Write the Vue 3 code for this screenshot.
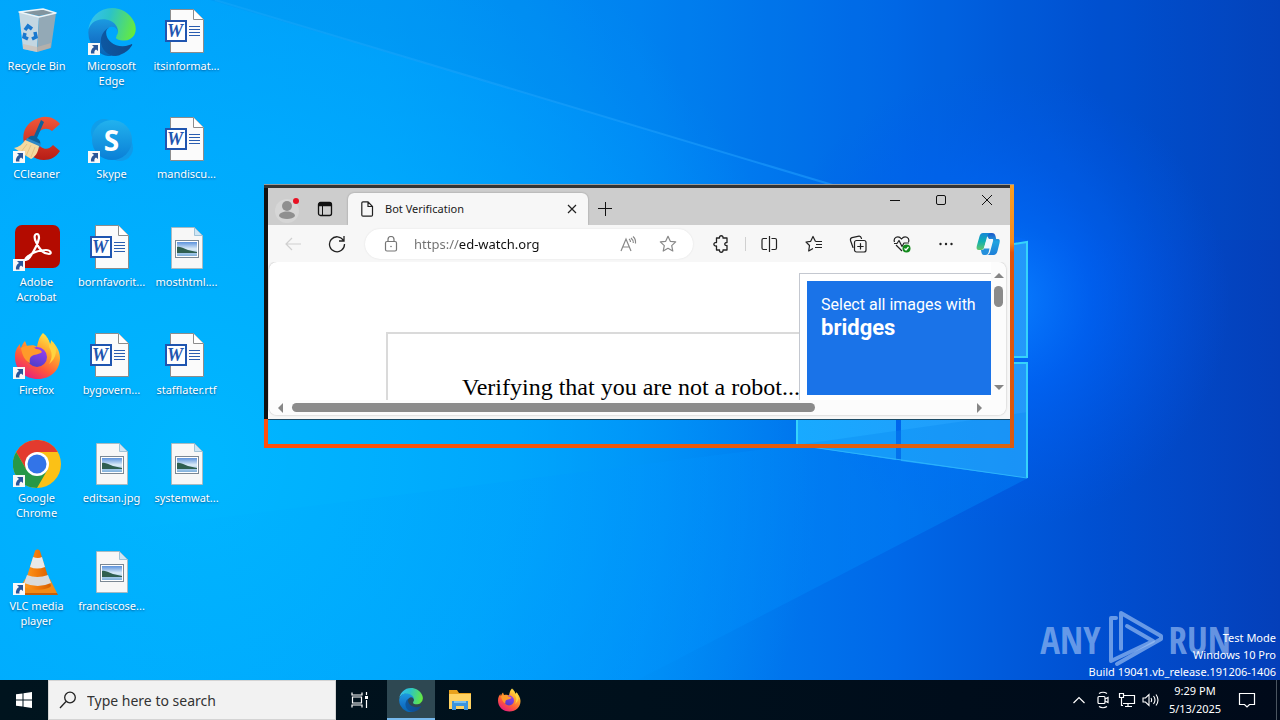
<template>
  <div class="screen">
    <svg class="symbols" aria-hidden="true">
      <defs>
        <linearGradient id="edge-a" x1="0" y1="0" x2="1" y2="0">
          <stop offset="0" stop-color="#0c59a4" />
          <stop offset="1" stop-color="#114a8b" />
        </linearGradient>
        <linearGradient id="edge-b" x1="0.5" y1="0" x2="0.5" y2="1">
          <stop offset="0" stop-color="#1b9de2" />
          <stop offset="0.5" stop-color="#1679cc" />
          <stop offset="1" stop-color="#0564b4" />
        </linearGradient>
        <linearGradient id="edge-c" x1="0" y1="0.4" x2="1" y2="0.6">
          <stop offset="0" stop-color="#35c1f1" />
          <stop offset="0.4" stop-color="#2bc3c8" />
          <stop offset="1" stop-color="#66eb3c" />
        </linearGradient>
        <linearGradient id="fox-a" x1="0.8" y1="0" x2="0.2" y2="1">
          <stop offset="0" stop-color="#fff44f" />
          <stop offset="0.35" stop-color="#ffa32c" />
          <stop offset="0.65" stop-color="#ff5a3a" />
          <stop offset="1" stop-color="#e31587" />
        </linearGradient>
        <linearGradient id="fox-b" x1="0.7" y1="0" x2="0.3" y2="1">
          <stop offset="0" stop-color="#9b3df0" />
          <stop offset="1" stop-color="#4b3fc8" />
        </linearGradient>
        <linearGradient id="skype-a" x1="0" y1="0" x2="0" y2="1">
          <stop offset="0" stop-color="#22b2ee" />
          <stop offset="1" stop-color="#0a7fd6" />
        </linearGradient>
        <linearGradient id="cc-a" x1="0" y1="0" x2="0" y2="1">
          <stop offset="0" stop-color="#f0583a" />
          <stop offset="1" stop-color="#b81d16" />
        </linearGradient>
        <linearGradient id="vlc-a" x1="0" y1="0" x2="1" y2="0">
          <stop offset="0" stop-color="#ff9a1f" />
          <stop offset="0.5" stop-color="#f27a0a" />
          <stop offset="1" stop-color="#d65f00" />
        </linearGradient>
        <linearGradient id="photo-a" x1="0" y1="0" x2="0" y2="1">
          <stop offset="0" stop-color="#5c92dc" />
          <stop offset="0.5" stop-color="#dcecf8" />
          <stop offset="1" stop-color="#7fb0dc" />
        </linearGradient>
        <linearGradient id="pilot-a" x1="0" y1="0" x2="0" y2="1">
          <stop offset="0" stop-color="#1688d8" />
          <stop offset="0.5" stop-color="#10b0b0" />
          <stop offset="1" stop-color="#62c66a" />
        </linearGradient>
        <linearGradient id="pilot-b" x1="0" y1="0" x2="0" y2="1">
          <stop offset="0" stop-color="#1a56c8" />
          <stop offset="0.4" stop-color="#22a4e0" />
          <stop offset="1" stop-color="#1e7fd8" />
        </linearGradient>
      </defs>

      <symbol id="edge" viewBox="4 0 257 259">
        <path fill="url(#edge-a)" d="M235.68 195.46a93.73 93.73 0 0 1-10.54 4.71 101.87 101.87 0 0 1-35.9 6.46c-47.32 0-88.54-32.55-88.54-74.32A31.48 31.48 0 0 1 117.13 105c-42.8 1.8-53.8 46.4-53.8 72.53 0 73.88 68.09 81.37 82.76 81.37 7.91 0 19.84-2.3 27-4.56l1.31-.44a128.34 128.34 0 0 0 66.6-52.8 4 4 0 0 0-5.32-5.64z" />
        <path fill="url(#edge-b)" d="M110.34 246.34A79.2 79.2 0 0 1 87.6 225 80.72 80.72 0 0 1 117.13 105c3.12-1.47 8.45-4.13 15.54-4a32.35 32.35 0 0 1 25.69 13 31.88 31.88 0 0 1 6.36 18.66c0-.21 24.46-79.6-80-79.6-43.9 0-80 41.66-80 78.21a130.15 130.15 0 0 0 12.11 56 128 128 0 0 0 156.38 67.11 75.55 75.55 0 0 1-62.78-8z" />
        <path fill="url(#edge-c)" d="M156.94 153.78c-.81 1.05-3.3 2.5-3.3 5.66 0 2.61 1.7 5.12 4.72 7.23 14.38 10 41.49 8.68 41.56 8.68a59.56 59.56 0 0 0 30.27-8.35 61.38 61.38 0 0 0 30.43-52.88c.26-22.41-8-37.31-11.34-43.91C228.09 28.76 182.35 0 132.61 0a128 128 0 0 0-128 126.2c.48-36.54 36.8-66.05 80-66.05 3.5 0 23.46.34 42 10.07 16.34 8.58 24.9 18.94 30.85 29.21 6.18 10.67 7.28 24.15 7.28 29.52s-2.74 13.33-7.8 19.83z" />
      </symbol>

      <symbol id="firefox" viewBox="0 0 48 48">
        <path fill="url(#fox-a)" d="M30 1c4 4 6 7 7 11 1-1 1-3 1-4 5 5 9 11 9 18 0 12-9 21-22 21S2 38 2 25c0-6 2-10 5-13 0 2 0 3 1 4 1-3 2-5 4-7l2 5c4-1 8-1 10 1 1-5 2-10 6-14z" />
        <circle cx="24" cy="25" r="10" fill="url(#fox-b)" />
        <path fill="#ff9a2a" d="M8 16c4-3 11-3 15 1 3 0 5 1 6 3-3 3-8 2-10 4-2 1-3 4-2 7-5-2-8-8-9-15z" />
        <path fill="#ffd33f" d="M30 1c4 5 6 8 6 14 3 4 4 11 0 17 8-6 9-16 4-22-1 2-2 3-3 3-1-5-3-9-7-12z" />
      </symbol>

      <symbol id="chrome" viewBox="0 0 48 48">
        <circle cx="24" cy="24" r="24" fill="#fbc116" />
        <path fill="#e33b2e" d="M3.200 12A24 24 0 0 1 44.800 12H24L13.600 30z" />
        <path fill="#279847" d="M3.200 12A24 24 0 0 0 24 48L34.400 30H13.600z" />
        <circle cx="24" cy="24" r="12" fill="#fff" />
        <circle cx="24" cy="24" r="9.500" fill="#3274e8" />
      </symbol>

      <symbol id="bin" viewBox="0 0 48 48">
        <path fill="#c3d7e2" d="M6 4l20 5-2 35-14-3z" />
        <path fill="#93a9b6" d="M26 9l17-4-5 35-14 4z" />
        <path fill="#82959f" d="M8 4l22-3 11 4-15 3z" />
        <path fill="none" stroke="#edf4f7" stroke-width="1.500" stroke-linejoin="round" d="M6 4l24-3 13 4-17 4z" />
        <path fill="#d4b7a2" opacity="0.5" d="M10 36l14 3 14-4-1 5-13 4-14-3z" />
        <g fill="none" stroke="#1878cf" stroke-width="3.500">
          <path d="M12 22l3-4 4 3" />
          <path d="M22 24l1 5-4 2" />
          <path d="M15 31l-4-2 1-4" />
        </g>
      </symbol>

      <symbol id="ccleaner" viewBox="0 0 48 48">
        <path fill="url(#cc-a)" d="M47 8C42 2 34-1 26 2 15 5 8 15 11 27c2 10 10 17 20 17 7 0 12-3 16-9l-7-6c-3 4-8 5-12 2-5-4-6-11-2-15 4-4 9-4 13-1z" />
        <path fill="#0f629b" d="M28 4l3 2-7 16c3 2 4 4 3 7l-13-5c1-3 4-5 7-4z" />
        <path fill="#2c88c8" d="M14 22l14 6-2 4-14-5z" />
        <path fill="#f4d9a0" d="M12 24l14 6c-1 7-4 11-8 13L1 32c5-1 9-4 11-8z" />
        <path fill="none" stroke="#e2bb7c" stroke-width="0.800" d="M14 28l-6 8M18 29l-5 11M22 31l-4 10" />
      </symbol>

      <symbol id="skype" viewBox="0 0 48 48">
        <circle cx="16" cy="16" r="13" fill="#1799e0" opacity="0.7" />
        <circle cx="32" cy="32" r="13" fill="#1a8fdc" opacity="0.6" />
        <circle cx="24" cy="24" r="20" fill="url(#skype-a)" />
      </symbol>

      <symbol id="acrobat" viewBox="0 0 48 48">
        <rect x="2" y="1" width="45" height="43" rx="7" fill="#b30b00" />
        <path fill="none" stroke="#fff" stroke-width="2.200" stroke-linejoin="round" d="M24 10c-3 0-3 4-1 8 3 7 8 12 13 12 3 0 2-4-3-4-7 0-14 3-19 7-4 4 0 4 3 0 4-6 8-13 9-19 0-3-1-4-2-4z" />
      </symbol>

      <symbol id="vlc" viewBox="0 0 48 48">
        <path fill="#f28b16" d="M12 31h25l7 14H4z" />
        <path fill="#c95f05" d="M4 45h40l1 2H4z" />
        <path fill="url(#vlc-a)" d="M22 3c1-2 4-2 5 0l11 35c-4 5-23 5-27 0z" />
        <path fill="#e9e9e9" d="M20 9q5 2 9 0l3 10q-8 3-15 0z" />
        <path fill="#dadada" d="M14 27q10 4 21 0l3 8q-13 6-27 0z" />
      </symbol>

      <symbol id="word" viewBox="0 0 48 48">
        <path fill="#fbfbfb" stroke="#8c8c8c" d="M7.500 1.500h23l10 10v33h-33z" />
        <path fill="#fff" stroke="#8c8c8c" d="M30.500 1.500v10h10" />
        <path stroke="#2a5db0" stroke-width="1" d="M26 18.500h11M26 21.500h11M26 24.500h11M26 27.500h11" />
        <rect x="3" y="13" width="20" height="20" fill="#fff" stroke="#1f55b0" stroke-width="2" />
      </symbol>

      <symbol id="photo" viewBox="0 0 48 48">
        <path fill="#f7f7f7" stroke="#b4b4b4" stroke-width="0.800" d="M8.500 3.500h23l8 8v33h-31z" />
        <path fill="#cfe6f5" stroke="#8fb6cf" stroke-width="0.800" d="M31.500 3.500v8h8z" />
        <rect x="12.500" y="16.500" width="23" height="17" fill="#fff" stroke="#7b8894" />
        <rect x="14" y="18" width="20" height="14" fill="url(#photo-a)" />
        <path fill="#2f5f50" d="M14 23c4-1 7 2 11 3l9 2v1H14z" />
      </symbol>

      <symbol id="explorer" viewBox="0 0 24 24">
        <path fill="#e8a11c" d="M1 2h8l2 3h12v3H1z" />
        <path fill="#ffd262" d="M1 6h22v15H1z" />
        <path fill="#3c94dc" d="M4 13h16v9h-4v-4H8v4H4z" />
        <path fill="#79c0f0" d="M6 13h12v2H6z" />
      </symbol>

      <symbol id="copilot" viewBox="0 0 24 24">
        <path fill="url(#pilot-b)" d="M9 1h7c2 0 3 1 3.500 3l.7 3H22c2 0 2 2 1.500 4l-2 8c-.6 2.500-2 4-4 4h-7c2 0 3-1 3.500-3l3-11c.5-1.500 0-2-1-2h-3z" />
        <path fill="url(#pilot-a)" d="M16 1H7C5 1 4 2.500 3.300 5L.8 14c-.6 2.500 0 4 2 4H5c2 0 2.700-1 3.200-3L11 5c.7-2.500 2-4 5-4z" />
        <path fill="#eef8ff" d="M10.500 8h5.300l-2.300 8.500H8z" />
        <path fill="#2590dc" d="M8 16.500h5.500l-.5 2.500c-.6 2.500-1.500 4-3.500 4H8c-2 0-2.500-1.500-3-5 2 0 2.500 0 3-1.500z" />
      </symbol>
    </svg>

    <main class="desktop">
      <svg class="wallpaper" viewBox="0 0 1280 720" preserveAspectRatio="xMidYMid slice" aria-hidden="true">
        <defs>
          <linearGradient id="wp-base" x1="0" y1="0" x2="1280" y2="0" gradientUnits="userSpaceOnUse">
            <stop offset="0" stop-color="#00a5fb" />
            <stop offset="0.3" stop-color="#009af8" />
            <stop offset="0.5" stop-color="#0086f4" />
            <stop offset="0.7" stop-color="#0068e8" />
            <stop offset="0.85" stop-color="#0050d2" />
            <stop offset="1" stop-color="#043fb9" />
          </linearGradient>
          <radialGradient id="wp-cyan" cx="200" cy="460" r="620" gradientUnits="userSpaceOnUse">
            <stop offset="0" stop-color="#00b7ff" />
            <stop offset="0.5" stop-color="#00b0ff" stop-opacity="0.7" />
            <stop offset="1" stop-color="#00a8ff" stop-opacity="0" />
          </radialGradient>
          <radialGradient id="wp-glow" cx="1000" cy="300" r="230" gradientUnits="userSpaceOnUse">
            <stop offset="0" stop-color="#0a80ff" />
            <stop offset="0.4" stop-color="#0068ff" stop-opacity="0.6" />
            <stop offset="1" stop-color="#0058f0" stop-opacity="0" />
          </radialGradient>
          <linearGradient id="wp-ray" x1="230" y1="0" x2="900" y2="0" gradientUnits="userSpaceOnUse">
            <stop offset="0" stop-color="#35b6ff" stop-opacity="0.2" />
            <stop offset="1" stop-color="#1d9dff" stop-opacity="0.6" />
          </linearGradient>
          <linearGradient id="wp-low" x1="900" y1="0" x2="100" y2="0" gradientUnits="userSpaceOnUse">
            <stop offset="0" stop-color="#0090ff" stop-opacity="0.35" />
            <stop offset="1" stop-color="#00a0ff" stop-opacity="0" />
          </linearGradient>
          <linearGradient id="wp-pane" x1="797" y1="0" x2="1028" y2="0" gradientUnits="userSpaceOnUse">
            <stop offset="0" stop-color="#18aaff" />
            <stop offset="1" stop-color="#2498fa" />
          </linearGradient>
        </defs>
        <rect width="1280" height="720" fill="url(#wp-base)" />
        <rect width="1280" height="720" fill="url(#wp-cyan)" />
        <rect width="1280" height="720" fill="url(#wp-glow)" />
        <path fill="#0060d0" opacity="0.100" d="M210 0H1280V240H1028L830 184z" />
        <path fill="url(#wp-low)" d="M797 445L1028 478 560 720H0V545z" />
        <path fill="none" stroke="url(#wp-ray)" stroke-width="2" d="M215 0L836 186" />
        <g fill="url(#wp-pane)">
          <path d="M901 262L1028 242V357H901z" />
          <path d="M797 364H896V460L797 445z" />
          <path d="M901 364L1028 362V478L901 461z" />
        </g>
        <path fill="#0a8af0" opacity="0.350" d="M797 445L1028 412V478z" />
        <path fill="none" stroke="#36d3fb" stroke-width="2" d="M1014 244L1027 242V357H1014M1014 363H1027V478M797 445V400" />
        <path fill="none" stroke="#2cb4fb" stroke-width="1" d="M1027 478L797 445" />
      </svg>

      <ul class="icons">
        <li v-for="item in shortcuts" :key="item.label">
          <button type="button" class="icon">
            <span class="picture">
              <svg width="48" height="48" aria-hidden="true"><use :href="'#' + item.icon" /></svg>
              <span v-if="item.icon === 'word'" class="word-w">W</span>
              <span v-if="item.icon === 'skype'" class="skype-s">S</span>
              <svg v-if="item.link" class="arrow" viewBox="0 0 12 12" aria-hidden="true">
                <path fill="#f8f8f8" d="M0 0h12v12H0z" />
                <path fill="#2a5699" d="M4 2h6v6L8 6.500C6.500 7.500 6 9 6.500 10.500H3C2.500 8 3.500 5.500 6 4z" />
              </svg>
            </span>
            <span class="label">{{ item.label }}</span>
          </button>
        </li>
      </ul>

      <div class="frame">
        <section class="browser" aria-label="Bot Verification">
          <header class="titlebar">
            <button type="button" class="profile" aria-label="Profile">
              <svg width="28" height="28" viewBox="0 0 28 28">
                <circle cx="13" cy="16" r="12" fill="#d6d6d6" />
                <circle cx="13" cy="11" r="5" fill="#8f8f8f" />
                <path fill="#8f8f8f" d="M5 21c0-6 16-6 16 0-2 4-14 4-16 0z" />
                <circle cx="22" cy="6" r="3" fill="#e81123" />
              </svg>
            </button>
            <button type="button" class="tabs-menu" aria-label="Tab actions">
              <svg width="16" height="16" viewBox="0 0 16 16" fill="none" stroke="#111">
                <rect x="1.500" y="1.500" width="13" height="13" rx="2" stroke-width="1.300" />
                <path d="M2 3.500h12" stroke-width="3.500" />
                <path d="M5.500 5v9" />
              </svg>
            </button>
            <div class="tab">
              <svg width="14" height="16" viewBox="0 0 14 16" fill="none" stroke="#222" stroke-width="1.200">
                <path d="M3 .8h5l4.500 4.700V14c0 .7-.5 1.200-1.200 1.200H3c-.8 0-1.200-.5-1.200-1.200V2C1.800 1.300 2.200.8 3 .8zM8 .8V5.500h4.500" />
              </svg>
              <span class="tab-name">Bot Verification</span>
              <button type="button" class="tab-close" aria-label="Close tab">
                <svg width="10" height="10" viewBox="0 0 10 10" stroke="#222" stroke-width="1.200"><path d="M1 1l8 8M9 1L1 9" /></svg>
              </button>
            </div>
            <button type="button" class="new-tab" aria-label="New tab">
              <svg width="14" height="14" viewBox="0 0 14 14" stroke="#111"><path d="M7.500 0v14M0 6.500h14" /></svg>
            </button>
            <div class="window-buttons">
              <button type="button" aria-label="Minimize">
                <svg width="12" height="12" viewBox="0 0 12 12" stroke="#111"><path d="M1 6.500h10" /></svg>
              </button>
              <button type="button" aria-label="Maximize">
                <svg width="12" height="12" viewBox="0 0 12 12" stroke="#111" fill="none"><rect x="1.500" y="1.500" width="9" height="9" rx="1.500" /></svg>
              </button>
              <button type="button" aria-label="Close">
                <svg width="12" height="12" viewBox="0 0 12 12" stroke="#111"><path d="M1 1l10 10M11 1L1 11" /></svg>
              </button>
            </div>
          </header>

          <div class="toolbar">
            <button type="button" class="tool" aria-label="Back" disabled>
              <svg width="18" height="18" viewBox="0 0 18 18" fill="none" stroke="#d0d0d0" stroke-width="1.200"><path d="M17 9H2M8 3L2 9l6 6" /></svg>
            </button>
            <button type="button" class="tool" aria-label="Refresh">
              <svg width="18" height="18" viewBox="0 0 18 18" fill="none" stroke="#222" stroke-width="1.300"><path d="M15.500 5.500A7.500 7.500 0 1 0 16.500 9M16 1v5h-5" /></svg>
            </button>
            <div class="address">
              <svg width="14" height="16" viewBox="0 0 14 16" fill="none" stroke="#767676" stroke-width="1.200">
                <rect x="1.500" y="5.500" width="11" height="9.500" rx="1.500" />
                <path d="M4 5.500V3.500a3 3 0 0 1 6 0v2" />
                <circle cx="7" cy="10.500" r="0.800" fill="#767676" stroke="none" />
              </svg>
              <input v-model="url" class="url" type="text" aria-label="Address bar" spellcheck="false" />
              <button type="button" class="inline-tool" aria-label="Read aloud">
                <svg width="18" height="16" viewBox="0 0 18 16" fill="none" stroke="#888" stroke-width="1.200">
                  <path d="M2 15L7 3l5 12M4 11h6M10 3q1.500 1 1.500 3M12 2q2.500 2 2.300 5M14 .5q3 2.500 2.500 7" />
                </svg>
              </button>
              <button type="button" class="inline-tool" aria-label="Add to favorites">
                <svg width="18" height="18" viewBox="0 0 18 18" fill="none" stroke="#888" stroke-width="1.200" stroke-linejoin="round">
                  <path d="M9 1.300l2.300 5 5.400.6-4 3.700 1.100 5.400L9 13.300 4.200 16l1.100-5.400-4-3.700 5.400-.6z" />
                </svg>
              </button>
            </div>
            <button type="button" class="tool" aria-label="Extensions">
              <svg width="18" height="18" viewBox="0 0 18 18" fill="none" stroke="#222" stroke-width="1.300" stroke-linejoin="round">
                <path d="M4.500 3h3c-.5-3 4-3 3.500 0H15v4.500c-3-.3-3 3.500 0 3V15h-4c.5 3-4 3-3.500 0h-3v-4c-3.500.5-3.500-4 0-3.500z" />
              </svg>
            </button>
            <span class="divider"></span>
            <button type="button" class="tool split" aria-label="Split screen">
              <svg width="18" height="18" viewBox="0 0 18 18" fill="none" stroke="#222" stroke-width="1.200">
                <path d="M7 3.500H3.500c-1 0-1.500.5-1.500 1.500v8c0 1 .5 1.500 1.500 1.500H7M11.500 3.500H15c1 0 1.500.5 1.500 1.500v8c0 1-.5 1.500-1.500 1.500h-3.500M9.500 1v16" />
              </svg>
            </button>
            <button type="button" class="tool" aria-label="Favorites">
              <svg width="18" height="18" viewBox="0 0 18 18" fill="none" stroke="#222" stroke-width="1.200" stroke-linejoin="round">
                <path d="M10.500 6.500L8 1.500 5.700 6.300 1 7l3.500 3.500L3.700 16 8 13.500M10.500 6.500H17M11 9.500h6M10 12.500h7" />
              </svg>
            </button>
            <button type="button" class="tool" aria-label="Collections">
              <svg width="18" height="18" viewBox="0 0 18 18" fill="none" stroke="#222" stroke-width="1.200" stroke-linecap="round">
                <path d="M4 12.500L1.500 5.500C1.200 4 1.700 3 3 2.700l7-1.500c1.300-.2 2 .6 2.500 2.300" />
                <rect x="5.500" y="5.500" width="11.500" height="11.500" rx="2" />
                <path d="M11.500 8.500v5.500M8.700 11.500h5.500" />
              </svg>
            </button>
            <button type="button" class="tool" aria-label="Browser essentials">
              <svg width="18" height="18" viewBox="0 0 18 18" fill="none" stroke="#222" stroke-width="1.200" stroke-linejoin="round">
                <path d="M1.500 7C0 3 5-.5 8.500 4 12-.5 17 3 15.500 7M3 10l6 6M1 8.500h3L6 5.500l3 6 2-3.500h5" />
                <circle cx="13.500" cy="13.500" r="4" fill="#138a1c" stroke="none" />
                <path d="M11.500 13.500l1.500 1.500 2.500-3" stroke="#fff" />
              </svg>
            </button>
            <button type="button" class="tool" aria-label="Settings and more">
              <svg width="18" height="18" viewBox="0 0 18 18" fill="#222">
                <circle cx="3.500" cy="9" r="1.200" /><circle cx="9" cy="9" r="1.200" /><circle cx="14.500" cy="9" r="1.200" />
              </svg>
            </button>
            <button type="button" class="tool copilot" aria-label="Copilot">
              <svg width="24" height="24"><use href="#copilot" /></svg>
            </button>
          </div>

          <div class="viewport">
            <div class="page">
              <div class="check-box">
                <p>Verifying that you are not a robot...</p>
              </div>
              <div class="captcha">
                <div class="captcha-head">
                  <span>Select all images with</span>
                  <strong>bridges</strong>
                </div>
              </div>
            </div>
            <div class="vbar">
              <button type="button" class="up" aria-label="Scroll up"></button>
              <span class="thumb"></span>
              <button type="button" class="down" aria-label="Scroll down"></button>
            </div>
            <div class="hbar">
              <button type="button" class="left" aria-label="Scroll left"></button>
              <span class="track"><span class="thumb"></span></span>
              <button type="button" class="right" aria-label="Scroll right"></button>
            </div>
          </div>
        </section>
      </div>

      <div class="brand">
        <span>ANY</span>
        <svg width="56" height="60" viewBox="0 0 56 60" fill="none" stroke="currentColor" stroke-width="4" stroke-linejoin="round" stroke-linecap="round">
          <path d="M9 8H4v43M4 51l42-20L20 16" />
          <path d="M14 39V3l40 23v3L10 54" />
        </svg>
        <span>RUN</span>
      </div>
      <div class="build">
        <p>Test Mode</p>
        <p>Windows 10 Pro</p>
        <p>Build 19041.vb_release.191206-1406</p>
      </div>
    </main>

    <footer class="taskbar">
      <button type="button" class="start" aria-label="Start">
        <svg width="16" height="16" viewBox="0 0 16 16" fill="#fff"><path d="M0 2.300L6.500 1.400V7.500H0zM7.500 1.200L16 0v7.500H7.500zM0 8.500h6.500v6.100L0 13.700zM7.500 8.500H16V16l-8.500-1.200z" /></svg>
      </button>
      <label class="search">
        <svg width="18" height="18" viewBox="0 0 18 18" fill="none" stroke="#222" stroke-width="1.300"><circle cx="11" cy="6.500" r="5.300" /><path d="M7 10.500L1 17" /></svg>
        <input v-model="query" type="text" placeholder="Type here to search" aria-label="Search" />
      </label>
      <button type="button" class="task-view" aria-label="Task View">
        <svg width="18" height="16" viewBox="0 0 18 16" fill="none" stroke="#fff" stroke-width="1.200">
          <path d="M1 .5v2.500h10V.5M1 15.500V13h10v2.500M1.500 5h9v6h-9zM15.500 0v3M15.500 8v8" />
          <path d="M14 4h3v3h-3z" fill="#fff" stroke="none" />
        </svg>
      </button>
      <button v-for="app in pinned" :key="app.icon" type="button" class="pinned" :class="{ active: app.active }" :aria-label="app.name">
        <svg width="24" height="24"><use :href="'#' + app.icon" /></svg>
      </button>
      <div class="tray">
        <button type="button" aria-label="Show hidden icons">
          <svg width="14" height="14" viewBox="0 0 14 14" fill="none" stroke="#fff" stroke-width="1.200"><path d="M1.500 10L7 4.500l5.500 5.500" /></svg>
        </button>
        <button type="button" aria-label="Meet Now">
          <svg width="14" height="18" viewBox="0 0 14 18" fill="none" stroke="#fff" stroke-width="1.200">
            <rect x="2" y="5.500" width="7" height="7" rx="1" /><path d="M9 8l3-1.500v5L9 10M3 2.500q4-2.500 8 0M3 15.500q4 2.500 8 0" />
          </svg>
        </button>
        <button type="button" aria-label="Network">
          <svg width="18" height="16" viewBox="0 0 18 16" fill="none" stroke="#fff" stroke-width="1.200"><path d="M6 3.500h10.500v8H5M10 11.500v3M7 14.500h7M1.500 1.500h4v4h-4zM3.500 5.500v8H5" /></svg>
        </button>
        <button type="button" aria-label="Volume">
          <svg width="18" height="14" viewBox="0 0 18 14" fill="none" stroke="#fff" stroke-width="1.100"><path d="M1 5v4h2.500L7 12.500v-11L3.500 5zM9 5q1.300 2 0 4M11.500 3q3 4 0 8M14 1.500q4 5.500 0 11" /></svg>
        </button>
        <button type="button" class="clock"><span>9:29 PM</span><span>5/13/2025</span></button>
        <button type="button" class="notices" aria-label="Notifications">
          <svg width="18" height="18" viewBox="0 0 18 18" fill="none" stroke="#fff" stroke-width="1.200"><path d="M1.500 2.500h15v11h-5L9 16l-2.500-2.500h-5z" /></svg>
        </button>
        <button type="button" class="peek" aria-label="Show desktop"></button>
      </div>
    </footer>
  </div>
</template>

<script setup>
import { ref } from 'vue'

const url = ref('https://ed-watch.org')
const query = ref('')

const shortcuts = [
  { label: 'Recycle Bin', icon: 'bin' },
  { label: 'CCleaner', icon: 'ccleaner', link: true },
  { label: 'Adobe Acrobat', icon: 'acrobat', link: true },
  { label: 'Firefox', icon: 'firefox', link: true },
  { label: 'Google Chrome', icon: 'chrome', link: true },
  { label: 'VLC media player', icon: 'vlc', link: true },
  { label: 'Microsoft Edge', icon: 'edge', link: true },
  { label: 'Skype', icon: 'skype', link: true },
  { label: 'bornfavorit...', icon: 'word' },
  { label: 'bygovern...', icon: 'word' },
  { label: 'editsan.jpg', icon: 'photo' },
  { label: 'franciscose...', icon: 'photo' },
  { label: 'itsinformat...', icon: 'word' },
  { label: 'mandiscu...', icon: 'word' },
  { label: 'mosthtml....', icon: 'photo' },
  { label: 'stafflater.rtf', icon: 'word' },
  { label: 'systemwat...', icon: 'photo' }
]

const pinned = [
  { name: 'Microsoft Edge', icon: 'edge', active: true },
  { name: 'File Explorer', icon: 'explorer' },
  { name: 'Firefox', icon: 'firefox' }
]
</script>

<style>
body {
  margin: 0;
}
</style>

<style scoped>
.screen {
  display: flex;
  flex-direction: column;
  height: 100vh;
  overflow: hidden;
  background: #0090f4;
  font-family: "Noto Sans", "Open Sans", sans-serif;
  font-size: 12px;
}
.symbols {
  position: absolute;
  width: 0;
  height: 0;
}
button {
  display: flex;
  align-items: center;
  justify-content: center;
  padding: 0;
  border: none;
  background: none;
  color: inherit;
  font: inherit;
}
p {
  margin: 0;
}

/* desktop */
.desktop {
  position: relative;
  flex: 1;
  min-height: 0;
}
.wallpaper {
  position: absolute;
  top: 0;
  left: 0;
  width: 100vw;
  height: 100vh;
}
.icons {
  position: relative;
  display: grid;
  grid-template-rows: repeat(auto-fill, 108px);
  grid-auto-columns: 75px;
  grid-auto-flow: column;
  justify-content: start;
  height: 100%;
  margin: 0;
  padding: 0;
  list-style: none;
}
.icon {
  flex-direction: column;
  gap: 2px;
  width: 73px;
  padding-top: 8px;
  color: #fff;
  font-size: 11px;
  line-height: 15px;
}
.picture {
  position: relative;
  height: 48px;
}
.word-w,
.skype-s {
  position: absolute;
  text-align: center;
}
.word-w {
  top: 13px;
  left: 3px;
  width: 19px;
  color: #1f55b0;
  font: italic bold 18px/20px "Liberation Serif", serif;
}
.skype-s {
  top: 8px;
  left: 0;
  width: 48px;
  font: bold 28px/32px "Open Sans", sans-serif;
}
.arrow {
  position: absolute;
  left: 0;
  bottom: 1px;
  width: 12px;
  height: 12px;
}
.label {
  max-width: 72px;
  text-shadow: 0 1px 2px rgba(0, 40, 90, 0.6);
}

/* browser window and the recording frame around it */
.frame {
  position: absolute;
  top: 184px;
  left: 264px;
  right: 266px;
  box-sizing: border-box;
  padding: 4px 4px 28px;
  background:
    linear-gradient(#9a9a9a, #9a9a9a) 0 0 / 100% 1px no-repeat,
    linear-gradient(#333, #333) 0 0 / calc(100% - 4px) 4px no-repeat,
    linear-gradient(#f9a022, #f58a1e 22%, #e0520c 26%, #d95a10) 100% 0 / 4px 100% no-repeat,
    linear-gradient(90deg, #ff4f0c, #e8590c 60%, #d96412) 0 100% / 100% 4px no-repeat,
    linear-gradient(#111 0, #111 235px, #ff4f0c 235px) 0 0 / 4px 100% no-repeat;
}
.browser {
  border-bottom: 1px solid #1b4b66;
  background: #f7f7f7;
  color: #1a1a1a;
}
.titlebar {
  display: flex;
  align-items: flex-end;
  height: 37px;
  background: #cdcdcd;
}
.profile {
  width: 40px;
  height: 32px;
}
.tabs-menu {
  width: 34px;
  height: 32px;
  margin-right: 6px;
}
.tab {
  display: flex;
  align-items: center;
  gap: 11px;
  box-sizing: border-box;
  width: 240px;
  height: 32px;
  padding: 0 8px 0 12px;
  border-radius: 6px 6px 0 0;
  background: #f7f7f7;
  box-shadow: 0 0 2px rgba(0, 0, 0, 0.3);
}
.tab-name {
  flex: 1;
  font-size: 11px;
  line-height: 14px;
}
.tab-close {
  width: 16px;
  height: 16px;
}
.new-tab {
  width: 34px;
  height: 32px;
}
.window-buttons {
  display: flex;
  align-self: flex-start;
  margin-left: auto;
}
.window-buttons button {
  width: 46px;
  height: 24px;
}
.toolbar {
  position: relative;
  display: flex;
  align-items: center;
  height: 37px;
  padding: 0 2px 0 3px;
  background: #f7f7f7;
}
.tool {
  width: 44px;
  height: 30px;
}
.copilot {
  width: 40px;
}
.address {
  display: flex;
  flex: 1;
  align-items: center;
  box-sizing: border-box;
  min-width: 0;
  height: 30px;
  margin: 0 6px;
  padding: 0 5px 0 19px;
  border-radius: 15px;
  background: #fff;
  box-shadow: 0 0 2px rgba(0, 0, 0, 0.1);
}
.url {
  flex: 1;
  min-width: 0;
  margin-left: 16px;
  padding: 0;
  border: none;
  outline: none;
  background: linear-gradient(90deg, #707070 45px, #111 45px);
  -webkit-background-clip: text;
  background-clip: text;
  color: transparent;
  caret-color: #111;
  font: 13px "Noto Sans", sans-serif;
}
.inline-tool {
  width: 40px;
  height: 30px;
}
.divider {
  width: 1px;
  height: 14px;
  margin: 0 1px 0 2px;
  background: #d0d0d0;
}
.split {
  margin-right: 1px;
}

/* web page */
.viewport {
  display: grid;
  grid-template-columns: 1fr 15px;
  grid-template-rows: 138px 15px;
  margin: 0 4px 4px 1px;
  border-radius: 8px;
  background: #fff;
  box-shadow: 0 0 2px rgba(0, 0, 0, 0.3);
  overflow: hidden;
}
.page {
  position: relative;
  padding: 70px 0 0 117px;
  overflow: hidden;
}
.check-box {
  padding: 39px 0 39px 74px;
  border: 2px solid #dadada;
  border-right: none;
  color: #000;
  font: 24px/28px "Liberation Serif", serif;
  white-space: nowrap;
}
.captcha {
  position: absolute;
  top: 11px;
  right: 0;
  box-sizing: border-box;
  width: 192px;
  height: 200px;
  padding: 7px 0 0 7px;
  border: 1px solid #c4c8d0;
  border-right: none;
  background: #fff;
}
.captcha-head {
  display: flex;
  flex-direction: column;
  box-sizing: border-box;
  height: 114px;
  padding: 14px;
  background: #1a73e8;
  color: #fff;
  font: 16px/20px Roboto, sans-serif;
  white-space: nowrap;
}
.captcha-head strong {
  font-size: 22px;
  line-height: 26px;
}
.vbar,
.hbar {
  display: flex;
  align-items: center;
  background: #fcfcfc;
}
.vbar {
  flex-direction: column;
  padding: 11px 0 10px;
}
.hbar {
  grid-column: 1 / -1;
  padding: 0 24px 0 9px;
}
.thumb {
  display: block;
  border-radius: 5px;
  background: #8b8b8b;
}
.vbar .thumb {
  width: 9px;
  height: 21px;
  margin: 8px 0 auto;
}
.track {
  flex: 1;
  margin: 0 6px 0 9px;
}
.track .thumb {
  width: 77%;
  height: 9px;
}
.up,
.down,
.left,
.right {
  width: 0;
  height: 0;
  border: 5px solid transparent;
}
.up {
  border-top: none;
  border-bottom-color: #858585;
}
.down {
  border-bottom: none;
  border-top-color: #858585;
}
.left {
  border-left: none;
  border-right-color: #858585;
}
.right {
  border-right: none;
  border-left-color: #858585;
}

/* marks in the lower right corner */
.brand {
  position: absolute;
  right: 49px;
  bottom: 10px;
  display: flex;
  align-items: center;
  gap: 6px;
  color: rgba(160, 195, 245, 0.65);
  font: 37px/40px "Open Sans Condensed", "Noto Sans ExtraCondensed", "Noto Sans Condensed", Roboto, sans-serif;
}
.build {
  position: absolute;
  right: 4px;
  bottom: 0;
  color: #fff;
  font-size: 11px;
  line-height: 17px;
  text-align: right;
}

/* taskbar */
.taskbar {
  position: relative;
  display: flex;
  height: 40px;
  background: linear-gradient(90deg, #00141e, #00101c 50%, #000a1a);
  color: #fff;
}
.start,
.task-view {
  width: 48px;
}
.task-view {
  margin-right: 3px;
}
.search {
  display: flex;
  align-items: center;
  box-sizing: border-box;
  width: 288px;
  padding: 0 10px;
  border: 1px solid #d4d4d4;
  background: #f2f2f2;
}
.search input {
  flex: 1;
  min-width: 0;
  margin-left: 10px;
  padding: 0;
  border: none;
  outline: none;
  background: none;
  font: 14px "Noto Sans", sans-serif;
}
.search input::placeholder {
  color: #333;
}
.pinned {
  width: 49px;
}
.pinned.active {
  width: 48px;
  background: #2e4852;
  box-shadow: inset 0 -2px #76b9ed;
}
.tray {
  display: flex;
  margin-left: auto;
}
.tray button {
  width: 24px;
}
.tray .clock {
  flex-direction: column;
  width: 64px;
  font-size: 11px;
  line-height: 18px;
}
.tray .notices {
  width: 40px;
}
.tray .peek {
  width: 4px;
  margin-left: 9px;
  border-left: 1px solid #4a5560;
}
</style>
